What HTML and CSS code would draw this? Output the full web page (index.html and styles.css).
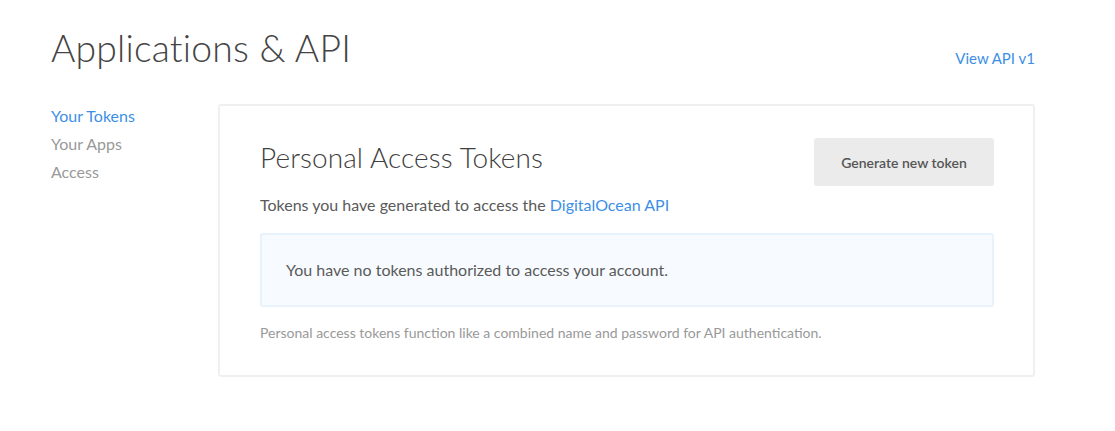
FILE: index.html
```html
<!DOCTYPE html>
<html lang="en">
<head>
<meta charset="utf-8">
<title>Applications &amp; API</title>
<link rel="stylesheet" href="styles.css">
</head>
<body>
<div class="page">
  <header class="header">
    <h1 class="title">Applications &amp; API</h1>
    <a class="api-link" href="#">View API v1</a>
  </header>
  <div class="main">
    <nav class="sidebar">
      <a class="nav-item active" href="#">Your Tokens</a>
      <a class="nav-item" href="#">Your Apps</a>
      <a class="nav-item" href="#">Access</a>
    </nav>
    <section class="card">
      <div class="card-head">
        <h2 class="card-title">Personal Access Tokens</h2>
        <button class="btn">Generate new token</button>
      </div>
      <p class="desc">Tokens you have generated to access the <a class="link" href="#">DigitalOcean API</a></p>
      <div class="empty">You have no tokens authorized to access your account.</div>
      <p class="note">Personal access tokens function like a combined name and password for API authentication.</p>
    </section>
  </div>
</div>
</body>
</html>
```

FILE: styles.css
```css
* { box-sizing: border-box; }
html, body { margin: 0; padding: 0; background: #fff; }
body {
  font-family: Lato, "Open Sans", "Liberation Sans", sans-serif;
  color: #444;
}
a { text-decoration: none; }
.page {
  padding: 23px 80px 0 51px;
}
.header {
  display: flex;
  justify-content: space-between;
  align-items: flex-start;
}
.title {
  margin: 0;
  font-size: 37.3px;
  font-weight: 300;
  line-height: 50px;
  color: #444;
  letter-spacing: 0.2px;
}
.api-link {
  margin-top: 25px;
  font-size: 15px;
  line-height: 20px;
  color: #3d8fe6;
}
.main {
  display: flex;
  align-items: flex-start;
  margin-top: 29px;
}
.sidebar {
  width: 167px;
  display: flex;
  flex-direction: column;
}
.nav-item {
  font-size: 16px;
  line-height: 28px;
  color: #999;
}
.nav-item.active { color: #3d8fe6; }
.card {
  flex: 1;
  margin-top: 2px;
  border: 2px solid #f0f0f0;
  border-radius: 3px;
  padding: 32px 39px 33px 40px;
}
.card-head {
  display: flex;
  justify-content: space-between;
  align-items: flex-start;
}
.card-title {
  margin: 0;
  padding-top: 2px;
  font-size: 28px;
  font-weight: 300;
  line-height: 34px;
  color: #3f3f3f;
  letter-spacing: 0.1px;
}
.btn {
  width: 180px;
  height: 48px;
  border: none;
  border-radius: 3px;
  background: #ebebeb;
  color: #555;
  font-family: inherit;
  font-size: 14px;
  font-weight: 600;
}
.desc {
  margin: 9px 0 0;
  font-size: 16px;
  line-height: 20px;
  color: #5a5a5a;
}
.link { color: #3d8fe6; }
.empty {
  margin-top: 18px;
  height: 74px;
  display: flex;
  align-items: center;
  padding: 0 24px;
  background: #f7fbff;
  border: 2px solid #e8f2fc;
  border-radius: 3px;
  font-size: 16px;
  line-height: 20px;
  color: #5a5a5a;
}
.note {
  margin: 17px 0 0;
  font-size: 14px;
  line-height: 18px;
  color: #999;
}
```
